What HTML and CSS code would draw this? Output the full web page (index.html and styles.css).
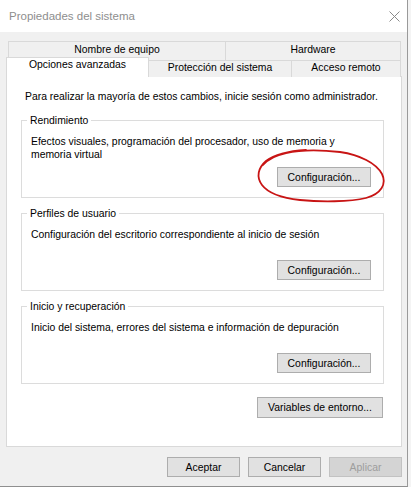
FILE: index.html
```html
<!DOCTYPE html>
<html lang="es">
<head>
<meta charset="utf-8">
<title>Propiedades del sistema</title>
<link rel="stylesheet" href="styles.css">
</head>
<body>
<div class="window">
  <div class="titlebar">
    <span class="title">Propiedades del sistema</span>
    <svg class="close" viewBox="0 0 11 11"><path d="M0.5 0.5 L10.5 10.5 M10.5 0.5 L0.5 10.5"/></svg>
  </div>
  <div class="body">
    <div class="tabs tabs-back">
      <div class="tab tab-name">Nombre de equipo</div>
      <div class="tab tab-hw">Hardware</div>
    </div>
    <div class="tabs tabs-front">
      <div class="tab tab-selected">Opciones avanzadas</div>
      <div class="tab tab-prot">Protección del sistema</div>
      <div class="tab tab-remote">Acceso remoto</div>
    </div>
    <div class="panel">
      <p class="intro">Para realizar la mayoría de estos cambios, inicie sesión como administrador.</p>
      <fieldset class="group">
        <legend>Rendimiento</legend>
        <p class="desc">Efectos visuales, programación del procesador, uso de memoria y<br>memoria virtual</p>
        <div class="btn-row"><button class="btn btn-config">Configuración...</button></div>
      </fieldset>
      <fieldset class="group">
        <legend>Perfiles de usuario</legend>
        <p class="desc">Configuración del escritorio correspondiente al inicio de sesión</p>
        <div class="btn-row"><button class="btn btn-config">Configuración...</button></div>
      </fieldset>
      <fieldset class="group">
        <legend>Inicio y recuperación</legend>
        <p class="desc">Inicio del sistema, errores del sistema e información de depuración</p>
        <div class="btn-row"><button class="btn btn-config">Configuración...</button></div>
      </fieldset>
      <div class="env-row"><button class="btn btn-env">Variables de entorno...</button></div>
    </div>
    <div class="footer">
      <button class="btn btn-dlg">Aceptar</button>
      <button class="btn btn-dlg">Cancelar</button>
      <button class="btn btn-dlg btn-disabled" disabled>Aplicar</button>
    </div>
  </div>
  <svg class="annotation" viewBox="0 0 408 487">
    <path d="M263 165 C268 159 276 155 286 153 C300 150 322 150 340 152 C360 155 376 163 382 174 C387 184 381 194 366 198 C350 202 320 202 300 200 C282 198 268 193 262 185 C256 177 258 168 266 161 C274 155 290 151 306 150"/>
  </svg>
</div>
</body>
</html>
```

FILE: styles.css
```css
* {
  box-sizing: border-box;
}

body {
  margin: 0;
  background: #f4f4f4;
  font-family: "Liberation Sans", Arial, sans-serif;
  font-size: 10.4px;
  color: #000;
}

.window {
  position: relative;
  width: 408px;
  height: 487px;
  background: #f0f0f0;
  border-right: 1px solid #9a9a9a;
  border-bottom: 1px solid #8f8f8f;
  display: flex;
  flex-direction: column;
}

.titlebar {
  height: 32px;
  flex: none;
  background: #fff;
  display: flex;
  align-items: center;
  justify-content: space-between;
  padding: 0 7px 0 9px;
}

.title {
  font-size: 11.5px;
  color: #8e8e8e;
}

.close {
  width: 11px;
  height: 11px;
  fill: none;
  stroke: #8a8a8a;
  stroke-width: 1;
}

.body {
  padding-top: 9px;
}

.tabs {
  display: flex;
}

.tab {
  border: 1px solid #d9d9d9;
  border-bottom: none;
  background: #f0f0f0;
  text-align: center;
  white-space: nowrap;
}

.tabs-back {
  margin-left: 8px;
  height: 19px;
}

.tabs-back .tab {
  height: 19px;
  line-height: 16px;
}

.tab-name {
  width: 218px;
}

.tab-hw {
  width: 176px;
  margin-left: -1px;
}

.tabs-front {
  margin-left: 6px;
  margin-top: -3px;
  height: 20px;
  align-items: flex-end;
}

.tab-selected {
  position: relative;
  z-index: 1;
  width: 143px;
  height: 20px;
  line-height: 14px;
  background: #fff;
}

.tab-prot {
  width: 144px;
  height: 17px;
  line-height: 14px;
  margin-left: -1px;
}

.tab-remote {
  width: 110px;
  height: 17px;
  line-height: 14px;
  margin-left: -1px;
}

.panel {
  margin: -1px 5px 0 6px;
  border: 1px solid #d9d9d9;
  background: #fff;
  padding: 13px 17px 28px 14px;
}

.intro {
  margin: 0 0 11px 4px;
  line-height: 13px;
}

.group {
  margin: 0 0 9px;
  min-width: 0;
  border: 1px solid #dcdcdc;
  padding: 8px 12px 10px 9px;
}

.group legend {
  padding: 0 3px;
  margin-left: -4px;
  line-height: 13px;
}

.desc {
  margin: 0;
  height: 26px;
  line-height: 13px;
}

.btn-row {
  display: flex;
  justify-content: flex-end;
  margin-top: 6px;
}

.btn {
  font: inherit;
  color: #000;
  background: #e1e1e1;
  border: 1px solid #adadad;
  border-radius: 0;
  padding: 0;
  white-space: nowrap;
}

.btn-config {
  width: 94px;
  height: 20px;
}

.env-row {
  display: flex;
  justify-content: flex-end;
  padding-top: 4px;
  margin-right: 1px;
}

.btn-env {
  width: 126px;
  height: 21px;
}

.footer {
  display: flex;
  justify-content: flex-end;
  gap: 8px;
  margin: 10px 5px 0 0;
}

.btn-dlg {
  width: 73px;
  height: 20px;
}

.btn-disabled {
  background: #d4d4d4;
  border-color: #c2c2c2;
  color: #9d9d9d;
}

.annotation {
  position: absolute;
  left: 0;
  top: 0;
  width: 408px;
  height: 487px;
  pointer-events: none;
  fill: none;
  stroke: #c81414;
  stroke-width: 1.8;
  stroke-linecap: round;
}
```
